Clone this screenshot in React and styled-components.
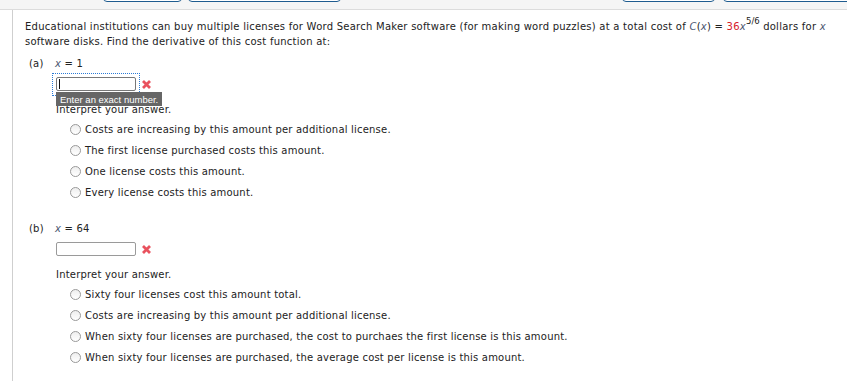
import React from 'react'
import styled, { createGlobalStyle } from 'styled-components'

const GlobalStyle = createGlobalStyle`
  html, body {
    margin: 0;
    padding: 0;
    background: #fff;
  }
  body {
    font-family: "DejaVu Sans", Verdana, sans-serif;
    font-size: 10px;
    letter-spacing: 0.2px;
    color: #222;
  }
`

const tabs = [
  { width: 79, gap: 103 },
  { width: 153, gap: 6 },
  { width: 93, gap: 281 },
  { width: 140, gap: 8 },
]

const partA = [
  'Costs are increasing by this amount per additional license.',
  'The first license purchased costs this amount.',
  'One license costs this amount.',
  'Every license costs this amount.',
]

const partB = [
  'Sixty four licenses cost this amount total.',
  'Costs are increasing by this amount per additional license.',
  'When sixty four licenses are purchased, the cost to purchaes the first license is this amount.',
  'When sixty four licenses are purchased, the average cost per license is this amount.',
]

const WrongMark = () => (
  <svg width="11" height="11" viewBox="0 0 11 11">
    <path d="M2 2 L9 9 M9 2 L2 9" stroke="#e9525e" strokeWidth="2.8" strokeLinecap="butt" />
  </svg>
)

const Part = ({ label, value, options, focused }) => (
  <PartBlock>
    <PartHead>
      <PartLabel>({label})</PartLabel>
      <Var>x</Var>&nbsp;= {value}
    </PartHead>
    <PartBody>
      <AnswerRow>
        <FocusRing $focused={focused}>
          <AnswerInput $focused={focused}>{focused && <Caret />}</AnswerInput>
          {focused && <Tooltip>Enter an exact number.</Tooltip>}
        </FocusRing>
        <WrongMark />
      </AnswerRow>
      <Prompt>Interpret your answer.</Prompt>
      <Options>
        {options.map(text => (
          <Option key={text}>
            <Radio />
            {text}
          </Option>
        ))}
      </Options>
    </PartBody>
  </PartBlock>
)

const App = () => (
  <>
    <GlobalStyle />
    <TopBar>
      {tabs.map((t, i) => (
        <Tab key={i} style={{ width: t.width, marginLeft: t.gap }} />
      ))}
    </TopBar>
    <Main>
      <Question>
        Educational institutions can buy multiple licenses for Word Search Maker software (for making word
        puzzles) at a total cost of <Var>C</Var>(<Var>x</Var>) = <Red>36</Red><Var>x</Var>
        <Sup>5/6</Sup> dollars for <Var>x</Var> software disks. Find the derivative of this cost function at:
      </Question>
      <Part label="a" value="1" options={partA} focused />
      <Part label="b" value="64" options={partB} />
    </Main>
  </>
)

export default App

const TopBar = styled.div`
  display: flex;
  height: 9px;
  background: #f5f5f5;
  border-bottom: 1px solid #dcdcdc;
  overflow: hidden;
`

const Tab = styled.div`
  flex: none;
  height: 20px;
  margin-top: -18px;
  box-sizing: border-box;
  border: 1px solid #1f5c8f;
  border-radius: 4px;
  background: #fff;
`

const Main = styled.div`
  margin-left: 12px;
  border-left: 1px solid #cfcfcf;
  padding: 9px 0 20px 12px;
  min-height: 340px;
`

const Question = styled.p`
  margin: 0;
  line-height: 15px;
  max-width: 815px;
  letter-spacing: 0.25px;
`

const Var = styled.i`
  font-style: italic;
  color: #4a5670;
`

const Red = styled.span`
  color: #d6202a;
`

const Sup = styled.sup`
  font-size: 8.5px;
  letter-spacing: 0;
  line-height: 0;
  vertical-align: 6px;
`

const PartBlock = styled.div`
  margin-top: 7px;
  & + & {
    margin-top: 18px;
  }
`

const PartHead = styled.div`
  display: flex;
  align-items: baseline;
  line-height: 15px;
  padding-left: 4px;
`

const PartLabel = styled.span`
  width: 26px;
  flex: none;
`

const PartBody = styled.div`
  padding-left: 31px;
`

const AnswerRow = styled.div`
  display: flex;
  align-items: center;
  gap: 5px;
  margin-top: 6px;
  height: 14px;
`

const FocusRing = styled.div`
  position: relative;
  margin: ${p => (p.$focused ? '-4px -4px -5px -4px' : '0')};
  padding: ${p => (p.$focused ? '3px 3px 4px 3px' : '0')};
  border: ${p => (p.$focused ? '1px dotted #2b7bd6' : 'none')};
`

const AnswerInput = styled.div`
  width: 80px;
  height: 14px;
  box-sizing: border-box;
  border: 1px solid ${p => (p.$focused ? '#777' : '#9a9a9a')};
  border-radius: 2px;
  background: #fff;
  display: flex;
  align-items: center;
  padding-left: 2px;
`

const Caret = styled.span`
  width: 1px;
  height: 10px;
  background: #111;
`

const Tooltip = styled.div`
  position: absolute;
  left: 3px;
  top: 18px;
  height: 14px;
  padding: 0 4px;
  display: flex;
  align-items: center;
  background: #666;
  color: #fff;
  font-family: "Liberation Sans", Arial, sans-serif;
  font-size: 9.5px;
  letter-spacing: 0;
  white-space: nowrap;
  z-index: 2;
`

const Prompt = styled.div`
  margin-top: 11px;
  line-height: 15px;
`

const Options = styled.div`
  margin-top: 2px;
  padding-left: 14px;
  display: flex;
  flex-direction: column;
`

const Option = styled.div`
  display: flex;
  align-items: center;
  gap: 4px;
  height: 21px;
`

const Radio = styled.span`
  width: 11px;
  height: 11px;
  box-sizing: border-box;
  border: 1px solid #999;
  border-radius: 50%;
  background: linear-gradient(#eee, #fff);
  flex: none;
`
